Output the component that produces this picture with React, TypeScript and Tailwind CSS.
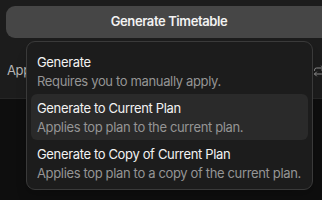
import { Repeat } from 'lucide-react';

const items = [
  { title: 'Generate', desc: 'Requires you to manually apply.', active: false },
  { title: 'Generate to Current Plan', desc: 'Applies top plan to the current plan.', active: true },
  {
    title: 'Generate to Copy of Current Plan',
    desc: 'Applies top plan to a copy of the current plan.',
    active: false,
  },
];

export default function App() {
  return (
    <div
      className="relative w-[322px] h-[200px] overflow-hidden bg-[#0e0e0e] text-[13px] tracking-[-0.35px]"
      style={{ fontFamily: 'Inter, "Noto Sans", sans-serif' }}
    >
      {/* Toolbar */}
      <div className="h-[99px] bg-[#1c1c1c] border-b border-[#262626]">
        <div className="pt-[6px] pl-[6px]">
          <button className="w-[326px] h-[32px] rounded-[9px] bg-[#464646] text-[#f2f2f2] font-semibold text-[13px] tracking-[-0.4px] flex items-center justify-center">
            Generate Timetable
          </button>
        </div>
        <div className="flex items-center justify-between pl-[7px] mt-[23px]">
          <span className="text-[#b5b5b5]">Apply</span>
          <Repeat className="w-[12px] h-[12px] text-[#8a8a8a] mr-[-3px]" strokeWidth={2} />
        </div>
      </div>

      {/* Dropdown menu */}
      <div className="absolute left-[26px] top-[41px] w-[287px] rounded-[9px] border border-[#3a3a3a] bg-[#1c1c1c] px-[4px] pt-[6px] pb-[3px] shadow-lg">
        {items.map((item) => (
          <div
            key={item.title}
            className={`h-[46px] rounded-[6px] px-[6px] flex flex-col justify-center leading-[18px] whitespace-nowrap ${
              item.active ? 'bg-[#2a2a2a]' : ''
            }`}
          >
            <div className="text-[#f2f2f2]">{item.title}</div>
            <div className="text-[#959595] mt-[1px]">{item.desc}</div>
          </div>
        ))}
      </div>
    </div>
  );
}
